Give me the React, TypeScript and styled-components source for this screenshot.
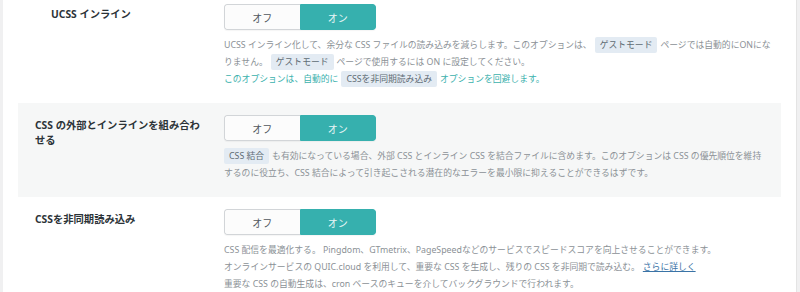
import styled, { createGlobalStyle } from "styled-components";

const GlobalStyle = createGlobalStyle`
  html, body {
    margin: 0;
    padding: 0;
    background: #f0f0f1;
  }
  body {
    font-family: "Noto Sans", "Noto Sans CJK JP", sans-serif;
    -webkit-font-smoothing: antialiased;
  }
`;

const Panel = styled.div`
  margin: 0 3px;
  background: #fff;
  border-right: 1px solid #e4e4e4;
  padding: 0 15px;
  min-height: 320px;
`;

const Row = styled.div<{ $shaded?: boolean; $top?: number }>`
  display: grid;
  grid-template-columns: 206px 1fr;
  padding: ${(p) => (p.$top !== undefined ? p.$top : 12)}px 10px 15px 0;
  background: ${(p) => (p.$shaded ? "#f6f7f7" : "transparent")};
`;

const Title = styled.div<{ $indent?: number }>`
  padding: 3px 22px 0 ${(p) => p.$indent ?? 17}px;
  font-size: 10.3px;
  line-height: 15px;
  font-weight: 700;
  color: #2c3338;
`;

const Field = styled.div`
  display: flex;
  flex-direction: column;
  align-items: flex-start;
  min-width: 0;
`;

const Switch = styled.div`
  display: flex;
  width: 152px;
  height: 26px;
  border-radius: 3px;
  overflow: hidden;
  box-shadow: 0 1px 1px rgba(0, 0, 0, 0.04);
`;

const SwitchOption = styled.div<{ $active?: boolean }>`
  flex: 1;
  display: flex;
  align-items: center;
  justify-content: center;
  font-size: 10px;
  box-sizing: border-box;
  background: ${(p) => (p.$active ? "#36b0ae" : "#fcfcfc")};
  color: ${(p) => (p.$active ? "#e9f6f6" : "#50575e")};
  border: 1px solid ${(p) => (p.$active ? "#36b0ae" : "#d2d5d8")};
  border-right: ${(p) => (p.$active ? "1px solid #36b0ae" : "none")};
  border-radius: ${(p) => (p.$active ? "0 3px 3px 0" : "3px 0 0 3px")};
`;

const Desc = styled.div`
  margin-top: 7px;
  font-size: 8.8px;
  line-height: 17px;
  color: #8b9196;
`;

const Line = styled.div<{ $accent?: boolean }>`
  white-space: nowrap;
  color: ${(p) => (p.$accent ? "#3bb1ad" : "inherit")};
`;

const Tag = styled.code<{ $flush?: boolean }>`
  font-family: inherit;
  font-size: 8.8px;
  background: #e3ebf3;
  color: #5f6b74;
  padding: 2px 5px;
  margin: 0 3px 0 ${(p) => (p.$flush ? 0 : 3)}px;
  border-radius: 2px;
`;

const MoreLink = styled.a`
  color: #3a73a6;
  text-decoration: underline;
  margin-left: 3px;
`;

const Toggle = () => (
  <Switch>
    <SwitchOption>オフ</SwitchOption>
    <SwitchOption $active>オン</SwitchOption>
  </Switch>
);

export default function App() {
  return (
    <>
      <GlobalStyle />
      <Panel>
        <Row $top={4}>
          <Title $indent={33}>UCSS インライン</Title>
          <Field>
            <Toggle />
            <Desc>
              <Line>
                UCSS インライン化して、余分な CSS ファイルの読み込みを減らします。このオプションは、
                <Tag>ゲストモード</Tag>ページでは自動的にONにな
              </Line>
              <Line>
                りません。<Tag>ゲストモード</Tag>ページで使用するには ON に設定してください。
              </Line>
              <Line $accent>
                このオプションは、自動的に<Tag>CSSを非同期読み込み</Tag>オプションを回避します。
              </Line>
            </Desc>
          </Field>
        </Row>
        <Row $shaded>
          <Title>CSS の外部とインラインを組み合わせる</Title>
          <Field>
            <Toggle />
            <Desc>
              <Line>
                <Tag $flush>CSS 結合</Tag>も有効になっている場合、外部 CSS とインライン CSS を結合ファイルに含めます。このオプションは CSS の優先順位を維持
              </Line>
              <Line>
                するのに役立ち、CSS 結合によって引き起こされる潜在的なエラーを最小限に抑えることができるはずです。
              </Line>
            </Desc>
          </Field>
        </Row>
        <Row>
          <Title>CSSを非同期読み込み</Title>
          <Field>
            <Toggle />
            <Desc>
              <Line>
                CSS 配信を最適化する。 Pingdom、GTmetrix、PageSpeedなどのサービスでスピードスコアを向上させることができます。
              </Line>
              <Line>
                オンラインサービスの QUIC.cloud を利用して、重要な CSS を生成し、残りの CSS を非同期で読み込む。
                <MoreLink href="#">さらに詳しく</MoreLink>
              </Line>
              <Line>
                重要な CSS の自動生成は、cron ベースのキューを介してバックグラウンドで行われます。
              </Line>
              <Line>
                推奨される値:<Tag>ON</Tag>
              </Line>
            </Desc>
          </Field>
        </Row>
      </Panel>
    </>
  );
}
